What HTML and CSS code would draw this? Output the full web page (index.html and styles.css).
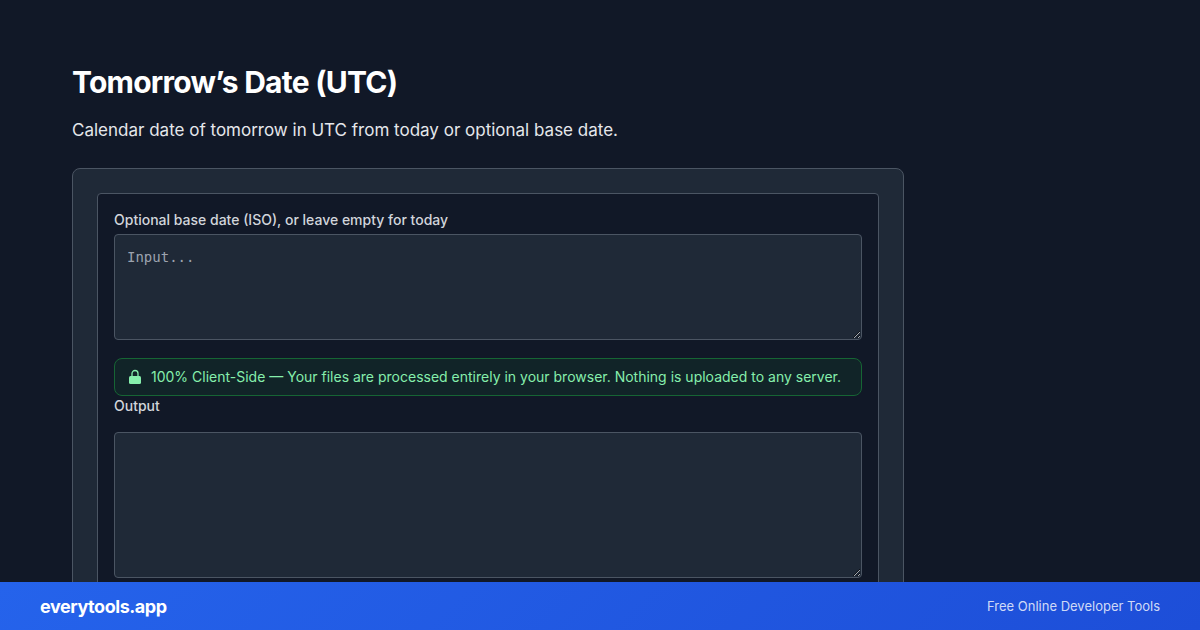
FILE: index.html
```
<!DOCTYPE html>
<html lang="en">
<head>
    <meta charset="UTF-8">
    <meta name="viewport" content="width=device-width, initial-scale=1.0">
    <title>Tomorrow’s Date (UTC)</title>
    <link rel="stylesheet" href="styles.css">
</head>
<body>
    <main class="page">
        <h1>Tomorrow’s Date (UTC)</h1>
        <p class="intro">Calendar date of tomorrow in UTC from today or optional base date.</p>
        <section class="card">
            <div class="tool">
                <label for="base-date">Optional base date (ISO), or leave empty for today</label>
                <textarea id="base-date" class="input-box" placeholder="Input..."></textarea>
                <div class="notice">
                    <svg class="lock" viewBox="0 0 16 16" aria-hidden="true">
                        <path d="M5 8V4.500a3 3 0 0 1 6 0V8" fill="none" stroke="currentColor" stroke-width="1.300"/>
                        <rect x="2" y="7" width="12" height="8" rx="1.500" fill="currentColor"/>
                    </svg>
                    <span>100% Client-Side — Your files are processed entirely in your browser. Nothing is uploaded to any server.</span>
                </div>
                <label for="output">Output</label>
                <textarea id="output" class="output-box" readonly></textarea>
            </div>
        </section>
    </main>
    <footer class="brand-bar">
        <strong>everytools.app</strong>
        <span>Free Online Developer Tools</span>
    </footer>
</body>
</html>
```
FILE: styles.css
```
*{
    box-sizing:border-box;
}
body{
    margin:0;
    height:100vh;
    overflow:hidden;
    display:flex;
    flex-direction:column;
    background:#111827;
    color:#e5e7eb;
    font-family:Inter, "Liberation Sans", sans-serif;
}
.page{
    flex:1;
    min-height:0;
    overflow:hidden;
    width:100%;
    max-width:976px;
    padding:64px 72px 0;
}
h1{
    margin:0 0 16px;
    color:#fff;
    font-size:30px;
    line-height:36px;
    font-weight:700;
    letter-spacing:-0.025em;
}
.intro{
    margin:0 0 24px;
    font-size:17px;
    line-height:28px;
}
.card{
    padding:24px;
    background:#1f2937;
    border:1px solid #4b5563;
    border-radius:8px;
}
.tool{
    display:flex;
    flex-direction:column;
    padding:16px;
    background:#111827;
    border:1px solid #4b5563;
    border-radius:4px;
}
label{
    font-size:14px;
    line-height:20px;
    font-weight:500;
    color:#d1d5db;
}
textarea{
    display:block;
    width:100%;
    padding:12px;
    background:#1f2937;
    border:1px solid #4b5563;
    border-radius:4px;
    color:#f3f4f6;
    font-family:"DejaVu Sans Mono", "Liberation Mono", monospace;
    font-size:14px;
    line-height:20px;
    resize:vertical;
}
textarea::placeholder{
    color:#9ca3af;
}
.input-box{
    height:106px;
    margin:4px 0 18px;
}
.output-box{
    height:146px;
    margin:16px 0;
}
.notice{
    display:flex;
    align-items:center;
    gap:8px;
    padding:8px 12px;
    border:1px solid #166534;
    border-radius:8px;
    background:#14532d33;
    color:#86efac;
    font-size:14px;
    line-height:20px;
}
.lock{
    flex:none;
    width:16px;
    height:16px;
}
.brand-bar{
    display:flex;
    align-items:center;
    justify-content:space-between;
    height:48px;
    padding:0 40px;
    background:linear-gradient(135deg, #2563eb, #1d4ed8);
    color:#fff;
}
.brand-bar strong{
    font-size:18px;
    letter-spacing:-0.025em;
}
.brand-bar span{
    font-size:13px;
    color:rgba(255,255,255,0.8);
}
```
